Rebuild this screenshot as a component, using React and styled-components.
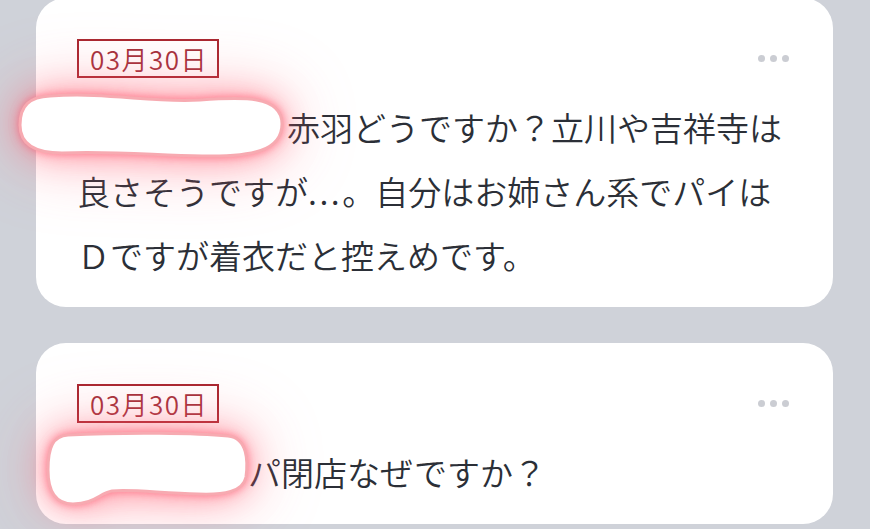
import React from "react";
import styled, { createGlobalStyle } from "styled-components";

const Global = createGlobalStyle`
  html, body { margin: 0; padding: 0; background: #cfd2d9; overflow: hidden; }
  body { font-family: "Noto Sans CJK JP", "Noto Sans", sans-serif; }
`;

const Page = styled.div`
  width: 870px;
  height: 529px;
  padding: 0 37px 0 36px;
  box-sizing: border-box;
  display: flex;
  flex-direction: column;
  gap: 36px;
  background: #cfd2d9;
`;

const Card = styled.div`
  background: #ffffff;
  border-radius: 30px;
  padding: 41px 43px 20px 41px;
  display: flex;
  flex-direction: column;
  gap: 17px;
  margin-top: ${(p) => (p.$first ? "-2px" : "0")};
`;

const Header = styled.div`
  display: flex;
  align-items: center;
  justify-content: space-between;
`;

const DateBadge = styled.div`
  box-sizing: border-box;
  width: 142px;
  height: 39px;
  border: 2px solid #a8262f;
  color: #a3303a;
  font-family: "Noto Sans CJK JP", "Noto Sans", sans-serif;
  font-weight: 350;
  font-size: 26px;
  letter-spacing: 1.5px;
  padding-left: 2px;
  display: flex;
  align-items: center;
  justify-content: center;
  line-height: 1;
`;

const Dots = styled.div`
  display: flex;
  gap: 5px;
  padding-right: 1px;
`;

const Dot = styled.span`
  width: 7px;
  height: 7px;
  border-radius: 50%;
  background: #cbcdd3;
`;

const Body = styled.div`
  position: relative;
  font-family: "Noto Sans CJK JP", "Noto Sans", sans-serif;
  font-size: 33px;
  font-weight: 350;
  line-height: 64px;
  color: #2b2f37;
  letter-spacing: 0;
`;

const Ellipsis = styled.span`
  letter-spacing: 2.5px;
`;

const Hidden = styled.span`
  display: inline-block;
  width: ${(p) => p.$w}px;
`;

const Blob = styled.svg`
  position: absolute;
  left: ${(p) => p.$x}px;
  top: ${(p) => p.$y}px;
  overflow: visible;
  filter: drop-shadow(0 0 4px rgba(255, 80, 105, 0.6))
    drop-shadow(0 0 16px rgba(255, 85, 105, 0.5))
    drop-shadow(0 0 34px rgba(255, 105, 125, 0.4));
`;

function Redaction({ x, y, w, h, d }) {
  return (
    <Blob $x={x} $y={y} width={w} height={h} viewBox={`0 0 ${w} ${h}`}>
      <path d={d} fill="#ffffff" stroke="#f7aab1" strokeWidth="3" />
    </Blob>
  );
}

function MoreDots() {
  return (
    <Dots>
      <Dot />
      <Dot />
      <Dot />
    </Dots>
  );
}

export default function App() {
  return (
    <>
      <Global />
      <Page>
        <Card $first>
          <Header>
            <DateBadge>03月30日</DateBadge>
            <MoreDots />
          </Header>
          <Body>
            <Hidden $w={210} />
            赤羽どうですか？立川や吉祥寺は良さそうですが<Ellipsis>...</Ellipsis>。自分はお姉さん系でパイはＤですが着衣だと控えめです。
            <Redaction
              x={-57}
              y={-4}
              w={263}
              h={68}
              d="M 30 5 C 90 1, 130 12, 180 9 C 222 6, 262 4, 262 33 C 262 60, 232 66, 182 65 C 132 64, 92 60, 42 62 C 8 62, 0 48, 0 34 C 0 14, 10 6, 30 5 Z"
            />
          </Body>
        </Card>
        <Card>
          <Header>
            <DateBadge>03月30日</DateBadge>
            <MoreDots />
          </Header>
          <Body>
            <Hidden $w={171} />
            パ閉店なぜですか？
            <Redaction
              x={-29}
              y={-8}
              w={200}
              h={73}
              d="M 20 3 C 80 0, 150 1, 180 4 C 200 6, 200 30, 198 45 C 195 60, 176 63, 150 62 C 112 61, 82 57, 64 59 C 52 61, 46 72, 25 72 C 5 72, 0 56, 0 38 C 0 15, 5 4, 20 3 Z"
            />
          </Body>
        </Card>
      </Page>
    </>
  );
}
